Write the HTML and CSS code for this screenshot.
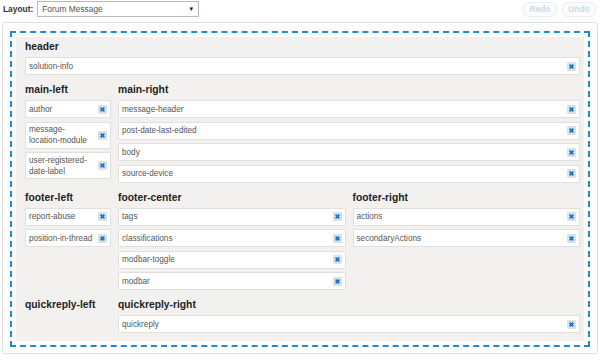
FILE: index.html
```html
<!DOCTYPE html>
<html lang="en">
<head>
  <meta charset="UTF-8" />
  <title>Layout editor</title>
  <link rel="stylesheet" href="styles.css">
</head>
<body>

  <!-- top bar -->
  <div class="toolbar">
    <span class="layout-label">Layout:</span>
    <div class="layout-select">
      <span>Forum Message</span>
      <span class="caret">▼</span>
    </div>
    <div class="history">
      <button disabled>Redo</button>
      <button disabled>Undo</button>
    </div>
  </div>

  <div class="panel">
    <div class="dropzone">
      <div class="zones">

        <div class="zone zone-full">
          <h3>header</h3>
          <ul class="items">
            <li class="item"><span>solution-info</span><svg class="remove" viewBox="0 0 9 9"><rect width="9" height="9" rx="1"/><path d="M2.6 2.6l3.8 3.8M6.4 2.6l-3.8 3.8"/></svg></li>
          </ul>
        </div>

        <div class="zone">
          <h3>main-left</h3>
          <ul class="items">
            <li class="item"><span>author</span><svg class="remove" viewBox="0 0 9 9"><rect width="9" height="9" rx="1"/><path d="M2.6 2.6l3.8 3.8M6.4 2.6l-3.8 3.8"/></svg></li>
            <li class="item"><span>message-<br>location-module</span><svg class="remove" viewBox="0 0 9 9"><rect width="9" height="9" rx="1"/><path d="M2.6 2.6l3.8 3.8M6.4 2.6l-3.8 3.8"/></svg></li>
            <li class="item"><span>user-registered-<br>date-label</span><svg class="remove" viewBox="0 0 9 9"><rect width="9" height="9" rx="1"/><path d="M2.6 2.6l3.8 3.8M6.4 2.6l-3.8 3.8"/></svg></li>
          </ul>
        </div>

        <div class="zone zone-wide">
          <h3>main-right</h3>
          <ul class="items">
            <li class="item"><span>message-header</span><svg class="remove" viewBox="0 0 9 9"><rect width="9" height="9" rx="1"/><path d="M2.6 2.6l3.8 3.8M6.4 2.6l-3.8 3.8"/></svg></li>
            <li class="item"><span>post-date-last-edited</span><svg class="remove" viewBox="0 0 9 9"><rect width="9" height="9" rx="1"/><path d="M2.6 2.6l3.8 3.8M6.4 2.6l-3.8 3.8"/></svg></li>
            <li class="item"><span>body</span><svg class="remove" viewBox="0 0 9 9"><rect width="9" height="9" rx="1"/><path d="M2.6 2.6l3.8 3.8M6.4 2.6l-3.8 3.8"/></svg></li>
            <li class="item"><span>source-device</span><svg class="remove" viewBox="0 0 9 9"><rect width="9" height="9" rx="1"/><path d="M2.6 2.6l3.8 3.8M6.4 2.6l-3.8 3.8"/></svg></li>
          </ul>
        </div>

        <div class="zone">
          <h3>footer-left</h3>
          <ul class="items">
            <li class="item"><span>report-abuse</span><svg class="remove" viewBox="0 0 9 9"><rect width="9" height="9" rx="1"/><path d="M2.6 2.6l3.8 3.8M6.4 2.6l-3.8 3.8"/></svg></li>
            <li class="item"><span>position-in-thread</span><svg class="remove" viewBox="0 0 9 9"><rect width="9" height="9" rx="1"/><path d="M2.6 2.6l3.8 3.8M6.4 2.6l-3.8 3.8"/></svg></li>
          </ul>
        </div>

        <div class="zone">
          <h3>footer-center</h3>
          <ul class="items">
            <li class="item"><span>tags</span><svg class="remove" viewBox="0 0 9 9"><rect width="9" height="9" rx="1"/><path d="M2.6 2.6l3.8 3.8M6.4 2.6l-3.8 3.8"/></svg></li>
            <li class="item"><span>classifications</span><svg class="remove" viewBox="0 0 9 9"><rect width="9" height="9" rx="1"/><path d="M2.6 2.6l3.8 3.8M6.4 2.6l-3.8 3.8"/></svg></li>
            <li class="item"><span>modbar-toggle</span><svg class="remove" viewBox="0 0 9 9"><rect width="9" height="9" rx="1"/><path d="M2.6 2.6l3.8 3.8M6.4 2.6l-3.8 3.8"/></svg></li>
            <li class="item"><span>modbar</span><svg class="remove" viewBox="0 0 9 9"><rect width="9" height="9" rx="1"/><path d="M2.6 2.6l3.8 3.8M6.4 2.6l-3.8 3.8"/></svg></li>
          </ul>
        </div>

        <div class="zone">
          <h3>footer-right</h3>
          <ul class="items">
            <li class="item"><span>actions</span><svg class="remove" viewBox="0 0 9 9"><rect width="9" height="9" rx="1"/><path d="M2.6 2.6l3.8 3.8M6.4 2.6l-3.8 3.8"/></svg></li>
            <li class="item"><span>secondaryActions</span><svg class="remove" viewBox="0 0 9 9"><rect width="9" height="9" rx="1"/><path d="M2.6 2.6l3.8 3.8M6.4 2.6l-3.8 3.8"/></svg></li>
          </ul>
        </div>

        <div class="zone">
          <h3>quickreply-left</h3>
        </div>

        <div class="zone zone-wide">
          <h3>quickreply-right</h3>
          <ul class="items">
            <li class="item"><span>quickreply</span><svg class="remove" viewBox="0 0 9 9"><rect width="9" height="9" rx="1"/><path d="M2.6 2.6l3.8 3.8M6.4 2.6l-3.8 3.8"/></svg></li>
          </ul>
        </div>

      </div>
    </div>
  </div>

</body>
</html>
```

FILE: styles.css
```css
body {
  margin: 0;
  font-family: "Liberation Sans", Arial, sans-serif;
  color: #333;
  background-color: #fff;
}

/* top bar */
.toolbar {
  display: flex;
  align-items: center;
  height: 18px;
  padding: 0 4px 0 3px;
}
.layout-label {
  font-size: 8.4px;
  font-weight: bold;
  color: #333;
  margin-right: 4px;
}
.layout-select {
  box-sizing: border-box;
  width: 162px;
  height: 16px;
  border: 1px solid #b9b9b9;
  display: flex;
  align-items: center;
  justify-content: space-between;
  padding: 0 4px;
  font-size: 8.4px;
  color: #555;
}
.layout-select .caret {
  font-size: 6px;
  color: #111;
}
.history {
  margin-left: auto;
  display: flex;
  gap: 5px;
}
.history button {
  box-sizing: border-box;
  width: 34px;
  height: 15px;
  padding: 0;
  border: 1px solid #e8eef3;
  border-radius: 6px;
  background-color: #fbfcfd;
  font-family: inherit;
  font-size: 8.4px;
  font-weight: bold;
  color: #c9dbe8;
}

/* panel with drop zones */
.panel {
  margin: 4px 2px 0;
  border: 1px solid #dedede;
  border-radius: 4px;
  padding: 8px 7px 6px;
}
.dropzone {
  border: 2px dashed #1e88d2;
  padding: 4px;
}
.zones {
  background-color: #f2f1ef;
  display: grid;
  grid-template-columns: 86px 1fr 1fr;
  gap: 7px;
  padding: 2px 4px 8px 9px;
}
.zone-full {
  grid-column: 1 / -1;
}
.zone-wide {
  grid-column: span 2;
}
.zone h3 {
  margin: 0 0 2px;
  font-size: 10.3px;
  line-height: 16px;
  font-weight: bold;
  color: #222;
}

.items {
  list-style: none;
  margin: 0;
  padding: 0;
  display: flex;
  flex-direction: column;
  gap: 3.5px;
}
.item {
  min-height: 13px;
  padding: 1.5px 3px 1.5px 3px;
  background-color: #fff;
  border: 1px solid #e0e0e0;
  display: flex;
  align-items: center;
  justify-content: space-between;
  gap: 2px;
  font-size: 8.2px;
  line-height: 11px;
  color: #555;
}
.item span {
  white-space: nowrap;
}
.remove {
  flex: none;
  width: 9px;
  height: 9px;
}
.remove rect {
  fill: #d8e2eb;
}
.remove path {
  stroke: #1a74c4;
  stroke-width: 1.7;
}
```
